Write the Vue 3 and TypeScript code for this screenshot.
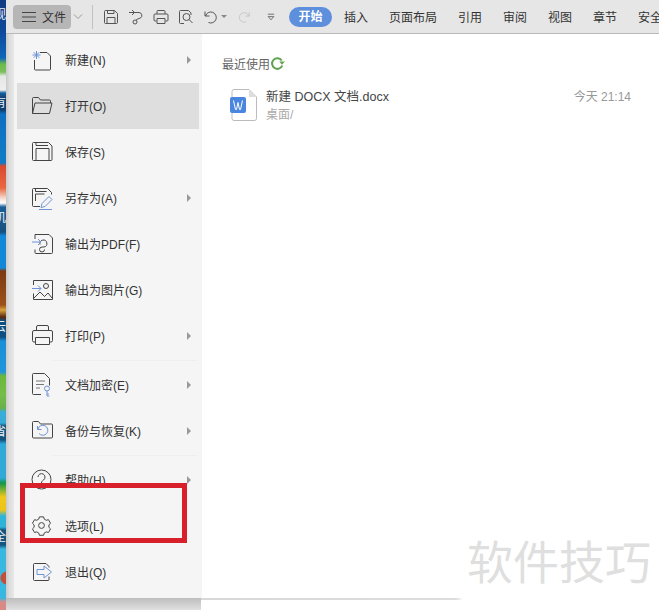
<template>
  <div class="screen">
    <div class="desktop">
      <span v-for="d in desktopLabels" :key="d.text" class="desktop-label" :style="{ top: d.top + 'px' }">{{ d.text }}</span>
    </div>

    <div class="window">
      <header class="toolbar">
        <div class="file-btn">
          <svg width="14" height="12" viewBox="0 0 14 12" fill="none" stroke="#444" stroke-width="1">
            <path d="M0 1.5h14M0 6h14M0 10.5h14" />
          </svg>
          <span>文件</span>
        </div>
        <svg class="chev" width="10" height="6" viewBox="0 0 10 6" fill="none" stroke="#999"><path d="M1 .5l4 4 4-4" /></svg>
        <i class="sep"></i>
        <div class="quick">
          <svg width="16" height="16" viewBox="0 0 16 16" fill="none" stroke="#555">
            <path d="M2.5 1.5h9l3 3v9a1 1 0 0 1-1 1h-11a1 1 0 0 1-1-1v-11a1 1 0 0 1 1-1z" />
            <path d="M4 14.5v-6h8v6M4.5 1.5v3h6.5v-3" />
          </svg>
          <svg width="16" height="16" viewBox="0 0 16 16" fill="none" stroke="#555">
            <path d="M6 3.5h5a3 3 0 0 1 1.500 5.500l-4 1.500v1M1 3.500h5M4 1l2.500 2.500L4 6" />
            <circle cx="7" cy="13" r="2" />
          </svg>
          <svg width="16" height="16" viewBox="0 0 16 16" fill="none" stroke="#555">
            <path d="M4 5V2.5a1 1 0 0 1 1-1h6a1 1 0 0 1 1 1V5M3.500 12H2a1 1 0 0 1-1-1V6a1 1 0 0 1 1-1h12a1 1 0 0 1 1 1v5a1 1 0 0 1-1 1h-1.500" />
            <path d="M4 9.5h8v5H4z" />
          </svg>
          <svg width="16" height="16" viewBox="0 0 16 16" fill="none" stroke="#555">
            <path d="M6 14.5H2.500a1 1 0 0 1-1-1v-11a1 1 0 0 1 1-1h8l2.500 2.500v2" />
            <circle cx="8.5" cy="8" r="3.500" />
            <path d="M11 10.5l3.500 3.500" />
          </svg>
          <div class="undo">
            <svg width="16" height="16" viewBox="0 0 16 16" fill="none" stroke="#555">
              <path d="M2 2.5v4.500h4.500M2.500 7a5.500 5.500 0 1 1 3 6.500" />
            </svg>
            <i class="caret"></i>
          </div>
          <svg class="redo" width="14" height="16" viewBox="0 0 16 16" fill="none" stroke="#c4c4c4">
            <path d="M14 2.5v4.500H9.500M13.500 7a5.500 5.500 0 1 0-3 6.500" />
          </svg>
          <svg class="more" width="8" height="10" viewBox="0 0 10 10" fill="none" stroke="#555">
            <path d="M1 1.5h8M1.500 4.500l3.500 4 3.500-4z" />
          </svg>
        </div>
        <nav class="tabs">
          <span class="tab active">开始</span>
          <span v-for="t in tabs" :key="t" class="tab">{{ t }}</span>
        </nav>
      </header>

      <div class="body">
        <aside class="menu">
          <template v-for="item in menu" :key="item.label">
            <div class="row" :class="{ selected: item.selected }">
              <svg class="row-icon" width="28" height="28" viewBox="0 0 28 28" fill="none" stroke="#444" v-html="item.icon"></svg>
              <span class="row-label">{{ item.label }}</span>
              <i v-if="item.sub" class="row-arrow"></i>
            </div>
            <div v-if="item.divider" class="divider"></div>
          </template>
        </aside>

        <main class="recent">
          <div class="recent-title">
            <span>最近使用</span>
            <svg width="15" height="15" viewBox="0 0 15 15" fill="none">
              <path d="M12.3 9.5a5.300 5.300 0 1 1-.6-5" stroke="#5fa14c" stroke-width="2" />
              <path d="M14.8 5.5H9.200l2.800 3.200z" fill="#5fa14c" />
            </svg>
          </div>
          <div class="file">
            <svg class="file-icon" width="27" height="32" viewBox="0 0 27 32" fill="none">
              <path d="M4 .5h15l7.500 7.500v21.500a2 2 0 0 1-2 2H4a2 2 0 0 1-2-2v-27a2 2 0 0 1 2-2z" fill="#fff" stroke="#bbb" />
              <path d="M19 .5v7.500h7.500z" fill="#ddd" />
              <rect x="0" y="8" width="16" height="16" rx="2" fill="#4a86e0" />
              <path d="M3.500 11.500l2 9h1l1.500-7 1.500 7h1l2-9" stroke="#fff" />
            </svg>
            <div class="file-text">
              <div class="file-name">新建 DOCX 文档.docx</div>
              <div class="file-path">桌面/</div>
            </div>
            <div class="file-time">今天 21:14</div>
          </div>
        </main>
      </div>

      <div class="foot">
        <div class="foot-left"></div>
        <div class="foot-right"></div>
      </div>
    </div>

    <div class="highlight"></div>
    <div class="watermark">软件技巧</div>
  </div>
</template>

<script setup lang="ts">
interface MenuItem {
  label: string;
  icon: string;
  sub?: boolean;
  selected?: boolean;
  divider?: boolean;
}

const desktopLabels = [
  { text: '视', top: 8 },
  { text: '有', top: 96 },
  { text: '机', top: 211 },
  { text: '云', top: 320 },
  { text: '省', top: 425 },
  { text: '全', top: 530 }
];

const tabs = ['插入', '页面布局', '引用', '审阅', '视图', '章节', '安全'];

const blue = 'stroke="#6f93d6"';

const menu: MenuItem[] = [
  {
    label: '新建(N)',
    sub: true,
    icon: `<path d="M11 7.5h7l3.500 3.500v13a1 1 0 0 1-1 1H6.500a1 1 0 0 1-1-1V15"/>
      <path ${blue} d="M7.5 6v8M3.500 10h8M4.700 7.200l5.600 5.600M10.300 7.200l-5.600 5.600"/>`
  },
  {
    label: '打开(O)',
    selected: true,
    icon: `<path d="M3.5 22.5v-15a1 1 0 0 1 1-1h5l2 2.500h9a1 1 0 0 1 1 1v2"/>
      <path d="M3.5 22.5l2.500-10.500h17l-2.500 10.500z"/>`
  },
  {
    label: '保存(S)',
    icon: `<path d="M4.500 5.500h15l3.500 3.500v13.500a1 1 0 0 1-1 1h-17.500a1 1 0 0 1-1-1v-16a1 1 0 0 1 1-1z"/>
      <path d="M7 23.500v-12h13v12M7 5.500v3h12"/>`
  },
  {
    label: '另存为(A)',
    sub: true,
    icon: `<path d="M11 23.500H4.500a1 1 0 0 1-1-1v-16a1 1 0 0 1 1-1h14l4 4v2"/>
      <path d="M6.500 18v-7h9M6.500 5.500v3h11"/>
      <path ${blue} d="M12 24.500l1-4 7-7 3 3-7 7-4 1zM10 26.500h13"/>`
  },
  {
    label: '输出为PDF(F)',
    icon: `<path d="M6 5.500h14l3.500 3.500v14.500a1 1 0 0 1-1 1H7a1 1 0 0 1-1-1v-3M6 10V5.500"/>
      <path d="M11 15.500a3.500 3.500 0 1 1 4 2.500h-2a2.500 2.500 0 1 0 2.500 2.500"/>
      <path ${blue} d="M3 13h9M9 10l3 3-3 3"/>`
  },
  {
    label: '输出为图片(G)',
    icon: `<path d="M4.500 10V5.500h19v19h-19v-6"/>
      <circle cx="17" cy="11" r="2.500"/>
      <path d="M5 23l6-6 4.500 4.500 3.500-3.500 4 5"/>
      <path ${blue} d="M3 13.500h9M9 10.500l3 3-3 3"/>`
  },
  {
    label: '打印(P)',
    sub: true,
    divider: true,
    icon: `<path d="M7.500 9.500V6a1.500 1.500 0 0 1 1.500-1.500h9A1.500 1.500 0 0 1 19.500 6v3.500"/>
      <path d="M6.500 21H5a1.500 1.500 0 0 1-1.500-1.500v-8.500A1.500 1.500 0 0 1 5 9.500h17a1.500 1.500 0 0 1 1.500 1.500v8.500A1.500 1.500 0 0 1 22 21h-1.500"/>
      <path d="M6.500 16.500h14v7h-14z"/>`
  },
  {
    label: '文档加密(E)',
    sub: true,
    icon: `<path d="M12 24.500H4.500a1 1 0 0 1-1-1v-19a1 1 0 0 1 1-1h11l5 5v7"/>
      <path d="M7 11h9M7 14.500h8M7 18h4" stroke="#777"/>
      <circle ${blue} cx="18" cy="18.500" r="2.500"/>
      <path ${blue} d="M18 21v5h2.500M18 24h2"/>`
  },
  {
    label: '备份与恢复(K)',
    sub: true,
    divider: true,
    icon: `<path d="M4.500 5.500h5l2 2.500h11a1 1 0 0 1 1 1v12a1 1 0 0 1-1 1h-18a1 1 0 0 1-1-1v-14.500a1 1 0 0 1 1-1z"/>
      <path ${blue} d="M9 13a5 5 0 1 1 1 4.500M8.500 10v3.500h4"/>`
  },
  {
    label: '帮助(H)',
    sub: true,
    icon: `<circle cx="12.500" cy="14.500" r="9.500"/>
      <path d="M9 12a3.500 3.500 0 1 1 5.500 3c-1.200.8-2 1.500-2 3"/>
      <path d="M12.500 19.500V21"/>`
  },
  {
    label: '选项(L)',
    icon: `<g transform="translate(12.500 14.500) scale(.83) translate(-14 -14.900)" stroke-width="1.200">
        <path d="M11.500 4.500h5l.8 2.700 2.400 1.400 2.700-.7 2.500 4.300-2 2v2.800l2 2-2.500 4.300-2.700-.7-2.400 1.400-.8 2.700h-5l-.8-2.700-2.400-1.400-2.700.7-2.500-4.300 2-2v-2.800l-2-2 2.500-4.300 2.700.7 2.400-1.400z"/>
        <circle cx="14" cy="14.900" r="3.500"/>
      </g>`
  },
  {
    label: '退出(Q)',
    icon: `<path d="M17 6.500H5.500a1 1 0 0 0-1 1v15a1 1 0 0 0 1 1H19a1 1 0 0 0 1-1v-3M20 10.500v-1l-3-3"/>
      <path ${blue} d="M8 12.500h7V9l7.500 6-7.500 6v-3.500H8z"/>`
  }
];
</script>

<style scoped>
.screen {
  position: relative;
  display: flex;
  width: 659px;
  height: 610px;
  overflow: hidden;
  background: #fff;
  color: #333;
  font-family: "Liberation Sans", "Noto Sans CJK SC", sans-serif;
  font-size: 12px;
}

.desktop {
  position: relative;
  flex: 0 0 6px;
  overflow: hidden;
  background:
    radial-gradient(circle at 7px 578px, #c0503c 6px, transparent 7px),
    linear-gradient(180deg,
      #113a82 0, #0e4a9c 33px, #0f66b8 58px, #6cba4a 64px, #7cc05c 72px, #e4e8e4 76px, #eeeeee 90px,
      #13609f 93px, #123f72 98px, #123f72 110px, #0f70c0 114px, #0f7cc6 163px, #d8492e 166px, #e9683f 188px,
      #f4d9cf 198px, #ffffff 203px, #1a5f96 207px, #17507f 232px, #1488d8 236px, #1488d8 268px, #7c3a12 271px,
      #9c5119 305px, #d9a23e 310px, #5a2a0c 317px, #0f4f80 321px, #0f4f80 337px, #1a8fd8 341px, #1f95da 372px,
      #6cb83a 376px, #74bd4a 395px, #68b04a 408px, #38aed8 412px, #35aad6 423px, #14557f 426px, #14557f 440px,
      #30a8d8 444px, #30a8d8 478px, #13974a 483px, #f0c81c 497px, #ecc41a 510px, #2fb3d8 516px, #2fb3d8 527px,
      #14557f 530px, #14557f 545px, #38b8e0 549px, #38b8e0 598px, #d98a86 602px, #d98a86 610px);
}

.desktop-label {
  position: absolute;
  left: -6px;
  color: #e8f0f6;
  font-size: 12px;
  line-height: 14px;
}

.window {
  flex: 1;
  display: flex;
  flex-direction: column;
  min-width: 0;
}

.toolbar {
  flex: 0 0 33px;
  display: flex;
  align-items: center;
  padding-left: 7px;
  background: #e6e6e6;
  border-bottom: 1px solid #b9b9b9;
  white-space: nowrap;
  overflow: hidden;
}

.file-btn {
  display: flex;
  align-items: center;
  gap: 6px;
  width: 58px;
  height: 24px;
  padding-left: 9px;
  box-sizing: border-box;
  border-radius: 4px;
  background: #b6b6b6;
  flex-shrink: 0;
}

.chev {
  margin-left: 2px;
  flex-shrink: 0;
}

.sep {
  width: 1px;
  height: 24px;
  margin: 0 9px;
  background: #c2c2c2;
  flex-shrink: 0;
}

.quick {
  display: flex;
  align-items: center;
  gap: 9px;
  margin-left: 1px;
  flex-shrink: 0;
}

.undo {
  display: flex;
  align-items: center;
  gap: 2px;
}

.caret {
  width: 0;
  height: 0;
  border: 3px solid transparent;
  border-top-color: #888;
  border-bottom-width: 0;
}

.redo {
  margin-left: 1px;
}

.more {
  margin-left: 7px;
}

.tabs {
  display: flex;
  align-items: center;
  gap: 21px;
  margin-left: 14px;
}

.tab {
  color: #333;
}

.tab.active {
  width: 43px;
  height: 20px;
  margin-right: -9px;
  border-radius: 10px;
  background: #5d8fdc;
  color: #fff;
  font-weight: 700;
  line-height: 20px;
  text-align: center;
}

.body {
  flex: 1;
  display: flex;
  min-height: 0;
  padding-left: 8px;
  background: linear-gradient(90deg, #c9c9c9, #dcdcdc 3px, #e8e8e8 8px);
}

.menu {
  flex: 0 0 188px;
  box-sizing: border-box;
  padding: 3px;
  background: #f5f5f5;
}

.row {
  display: flex;
  align-items: center;
  height: 46px;
  padding-left: 12px;
}

.row.selected {
  background: #dedede;
}

.row-icon {
  flex-shrink: 0;
  margin-top: -2px;
}

.row-label {
  margin-left: 8px;
  padding-bottom: 2px;
}

.row-arrow {
  width: 0;
  height: 0;
  margin-left: auto;
  margin-right: 8px;
  border: 4px solid transparent;
  border-left: 4px solid #999;
  border-right-width: 0;
}

.divider {
  height: 1px;
  margin: 1px 2px 1px 35px;
  background: #eeeeee;
}

.recent {
  flex: 1;
  min-width: 0;
  padding: 22px 28px 0 20px;
  background: #fff;
}

.recent-title {
  display: flex;
  align-items: center;
  height: 15px;
  color: #666;
}

.file {
  display: flex;
  align-items: flex-start;
  margin-top: 17px;
  padding-left: 8px;
}

.file-icon {
  flex-shrink: 0;
  margin-top: 1px;
}

.file-text {
  flex: 1;
  margin-left: 9px;
  line-height: 18px;
}

.file-name {
  color: #444;
  font-size: 12.5px;
}

.file-path {
  color: #aaa;
}

.file-time {
  color: #999;
  line-height: 18px;
}

.foot {
  flex: 0 0 12px;
  display: flex;
}

.foot-left {
  flex: 0 0 195px;
  background: linear-gradient(180deg, #bdbdbd, #e0e0e0);
}

.foot-right {
  flex: 1;
  height: 2px;
  background: linear-gradient(90deg, #d8d8d8 0, #dddddd 255px, #fff 262px);
}

.highlight {
  position: absolute;
  left: 20px;
  top: 483px;
  width: 167px;
  height: 60px;
  box-sizing: border-box;
  border: 5px solid #d8202b;
}

.watermark {
  position: absolute;
  left: 467px;
  top: 526px;
  color: #dfdfdf;
  font-family: "Noto Sans CJK SC", sans-serif;
  font-size: 46px;
  line-height: 66px;
  white-space: nowrap;
}
</style>
